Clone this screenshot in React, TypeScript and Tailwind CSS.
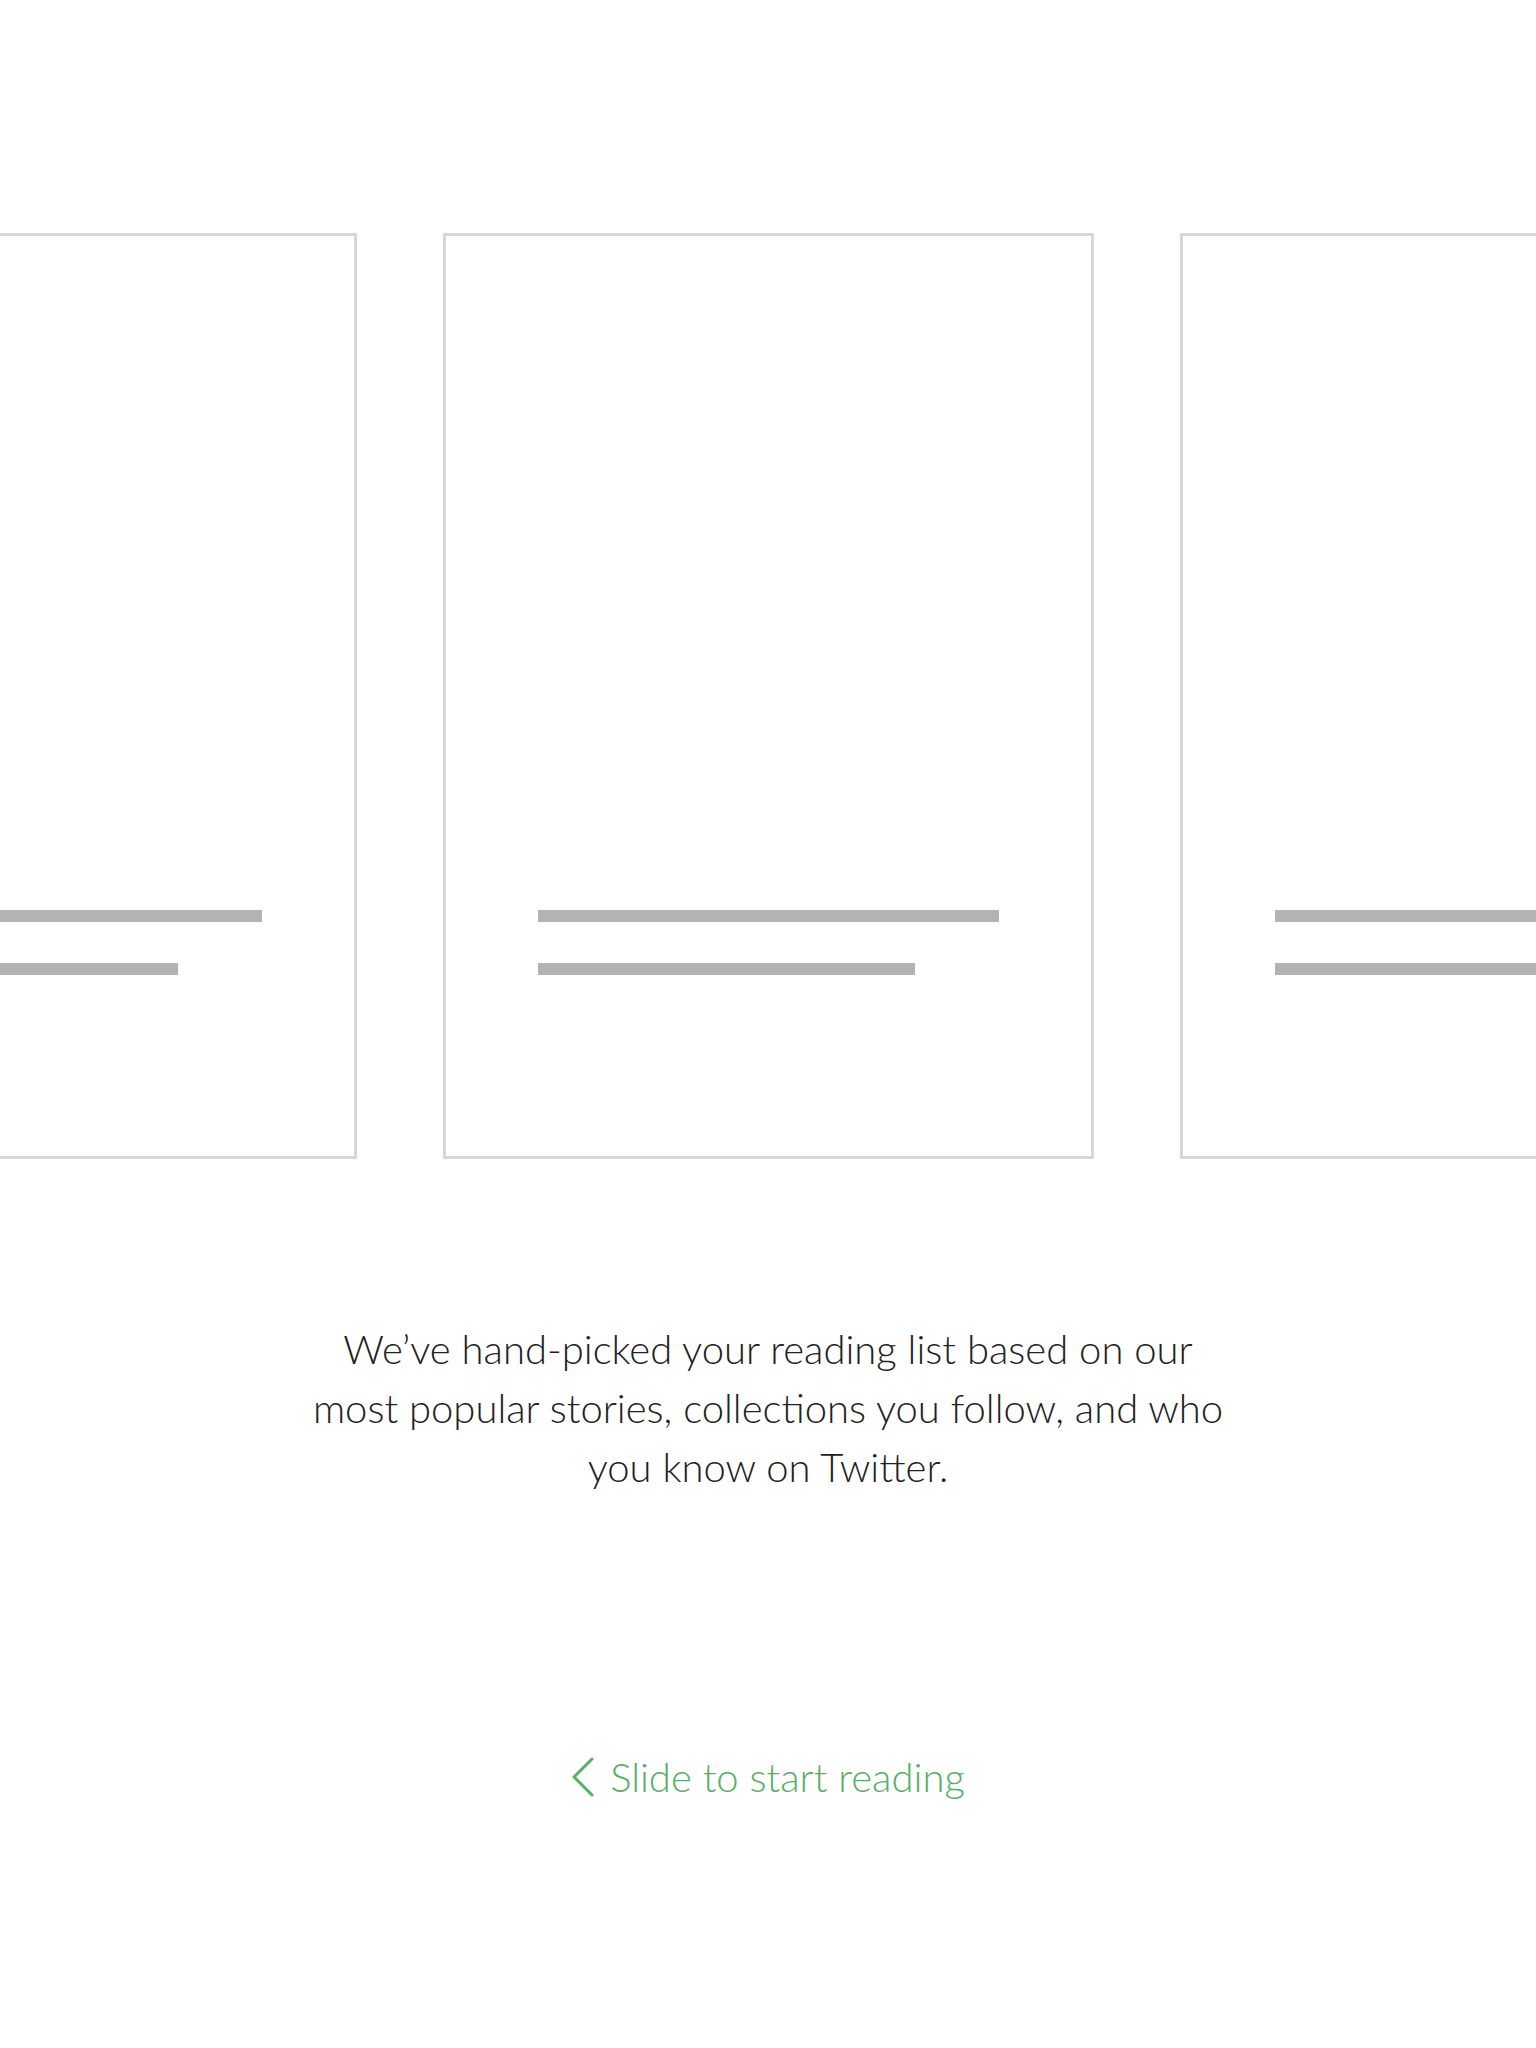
import React from 'react';

const Card = () => (
  <div className="w-[651px] h-[926px] shrink-0 border-[3px] border-[#d6d6d6] flex flex-col justify-end gap-[41px] px-[92px] pb-[181px]">
    <div className="h-[12px] w-full bg-[#b3b3b3]"></div>
    <div className="h-[12px] w-[377px] bg-[#b3b3b3]"></div>
  </div>
);

export default function App() {
  return (
    <div className="min-h-[2048px] w-full bg-white overflow-hidden font-['Lato','Liberation_Sans',sans-serif]">
      {/* Story cards carousel */}
      <div className="flex justify-center gap-[86px] pt-[233px] overflow-hidden">
        <Card />
        <Card />
        <Card />
      </div>

      <p className="mt-[161px] text-center text-[40px] leading-[59px] font-light text-[#222222]">
        We’ve hand-picked your reading list based on our
        <br />
        most popular stories, collections you follow, and who
        <br />
        you know on Twitter.
      </p>

      <div className="mt-[255px] flex items-center justify-center gap-[15px] text-[#57ae66]">
        <svg width="24" height="40" viewBox="0 0 24 40" fill="none" stroke="currentColor" strokeWidth="3" strokeLinecap="round" strokeLinejoin="round">
          <path d="M21 2 L3 20 L21 38" />
        </svg>
        <span className="text-[40px] font-light leading-[50px]">Slide to start reading</span>
      </div>
    </div>
  );
}
